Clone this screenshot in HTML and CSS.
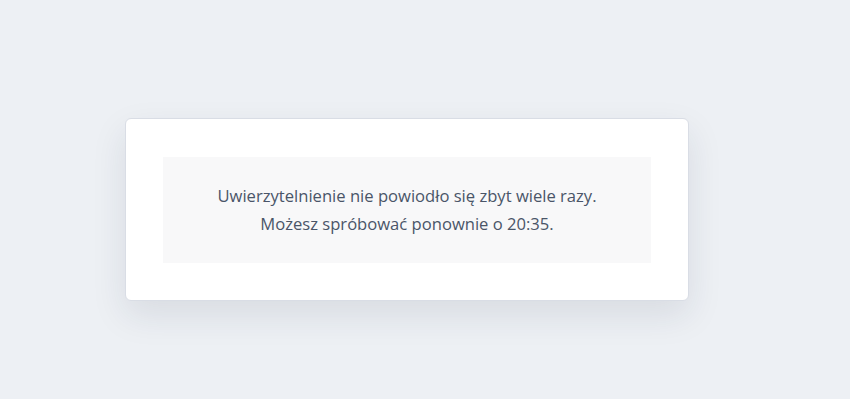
FILE: index.html
```html
<!DOCTYPE html>
<html>
<head>
    <title>Uwierzytelnienie</title>
    <link rel="stylesheet" href="styles.css">
</head>
<body>
    <div class="page">
        <div class="card">
            <div class="message">
                <p>Uwierzytelnienie nie powiodło się zbyt wiele razy.</p>
                <p>Możesz spróbować ponownie o 20:35.</p>
            </div>
        </div>
    </div>
</body>
</html>
```

FILE: styles.css
```css
html, body {
    margin: 0;
    padding: 0;
    height: 100%;
}

body {
    background-color: #edf0f4;
    font-family: "Open Sans", "Noto Sans", sans-serif;
    color: #4a5568;
}

.page {
    display: flex;
    justify-content: center;
    padding-top: 118px;
    padding-left: 125px;
    padding-right: 161px;
}

.card {
    width: 562px;
    background-color: #ffffff;
    border: 1px solid #d9dde5;
    border-radius: 6px;
    padding: 38px 37px 37px 37px;
    box-shadow: 0 14px 35px rgba(30, 40, 70, 0.1);
}

.message {
    background-color: #f8f8f9;
    padding: 25px 20px;
    text-align: center;
    font-size: 16.6px;
    line-height: 28px;
}

.message p {
    margin: 0;
}
```
